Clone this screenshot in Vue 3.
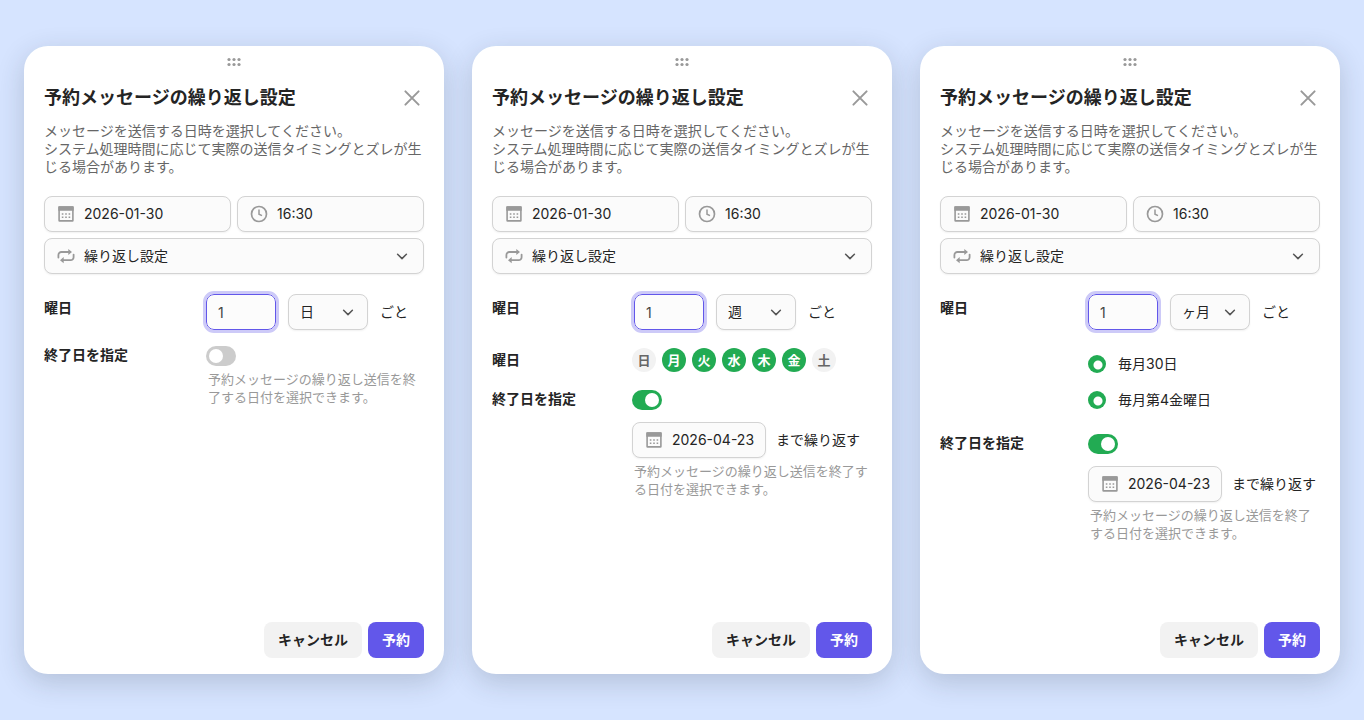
<script setup>
import { reactive } from 'vue'

const week = ['日', '月', '火', '水', '木', '金', '土']
const units = ['日', '週', 'ヶ月']

const panels = reactive([
  { id: 'daily', unit: '日', count: '1', date: '2026-01-30', time: '16:30', ends: false, until: '' },
  {
    id: 'weekly', unit: '週', count: '1', date: '2026-01-30', time: '16:30', ends: true, until: '2026-04-23',
    days: ['月', '火', '水', '木', '金'],
  },
  {
    id: 'monthly', unit: 'ヶ月', count: '1', date: '2026-01-30', time: '16:30', ends: true, until: '2026-04-23',
    choices: ['毎月30日', '毎月第4金曜日'],
  },
])

function toggleDay(panel, day) {
  const at = panel.days.indexOf(day)
  if (at < 0) panel.days.push(day)
  else panel.days.splice(at, 1)
}
</script>

<template>
  <svg class="sprite" aria-hidden="true">
    <symbol id="calendar" viewBox="0 0 18 18">
      <rect x="2.1" y="2.1" width="13.8" height="13.8" rx="0.4" fill="none" stroke="currentColor" stroke-width="1.6" />
      <path d="M1.8 1.3h14.4q.5 0 .5.5v4H1.3v-4q0-.5.5-.5z" fill="currentColor" />
      <path d="M4.8 8.2h1.6v1.6H4.8zM8.2 8.2h1.6v1.6H8.2zM11.6 8.2h1.6v1.6h-1.6zM4.8 11.4h1.6v1.6H4.8zM8.2 11.4h1.6v1.6H8.2zM11.6 11.4h1.6v1.6h-1.6z" fill="currentColor" />
    </symbol>
    <symbol id="clock" viewBox="0 0 18 18">
      <circle cx="9" cy="9" r="7.5" fill="none" stroke="currentColor" stroke-width="1.7" />
      <path d="M9 4.4v4.8l3 1.5" fill="none" stroke="currentColor" stroke-width="1.5" />
    </symbol>
    <symbol id="repeat" viewBox="0 0 18 18">
      <path d="M1.4 10.6V8a3 3 0 0 1 3-3H12M16.6 7.6v2.6a3 3 0 0 1-3 3H6" fill="none" stroke="currentColor" stroke-width="1.8" stroke-linecap="round" />
      <path d="M11.3 1.9l3.7 3.1-3.7 3.1zM6.7 10.1L3 13.2l3.7 3.1z" fill="currentColor" />
    </symbol>
    <symbol id="chevron" viewBox="0 0 12 12">
      <path d="M1.6 4.2L6 8.6l4.4-4.4" fill="none" stroke="currentColor" stroke-width="1.5" stroke-linecap="round" stroke-linejoin="round" />
    </symbol>
  </svg>

  <main class="page">
    <form v-for="p in panels" :key="p.id" class="card" :class="p.id" @submit.prevent>
      <svg class="grip" viewBox="0 0 14 12" aria-hidden="true">
        <g fill="currentColor">
          <circle cx="2" cy="3.5" r="1.6" /><circle cx="7" cy="3.5" r="1.6" /><circle cx="12" cy="3.5" r="1.6" />
          <circle cx="2" cy="8.5" r="1.6" /><circle cx="7" cy="8.5" r="1.6" /><circle cx="12" cy="8.5" r="1.6" />
        </g>
      </svg>

      <header class="head">
        <h2>予約メッセージの繰り返し設定</h2>
        <button type="button" class="close" aria-label="閉じる">
          <svg viewBox="0 0 24 24"><path d="M5.4 5.4l13.2 13.2M18.6 5.4L5.4 18.6" fill="none" stroke="currentColor" stroke-width="2" stroke-linecap="round" /></svg>
        </button>
      </header>
      <p class="lead">メッセージを送信する日時を選択してください。<br>システム処理時間に応じて実際の送信タイミングとズレが生じる場合があります。</p>

      <div class="when">
        <label class="field">
          <svg class="icon"><use href="#calendar" /></svg>
          <input v-model="p.date" type="text" aria-label="日付">
        </label>
        <label class="field">
          <svg class="icon"><use href="#clock" /></svg>
          <input v-model="p.time" type="text" aria-label="時刻">
        </label>
        <label class="field wide">
          <svg class="icon"><use href="#repeat" /></svg>
          <select aria-label="繰り返し"><option>繰り返し設定</option></select>
          <svg class="chevron"><use href="#chevron" /></svg>
        </label>
      </div>

      <div class="rules">
        <label class="name first" :for="p.id + '-count'">曜日</label>
        <div class="line every">
          <input :id="p.id + '-count'" v-model="p.count" class="count" type="text" inputmode="numeric">
          <div class="field unit">
            <select v-model="p.unit" aria-label="単位">
              <option v-for="u in units" :key="u">{{ u }}</option>
            </select>
            <svg class="chevron"><use href="#chevron" /></svg>
          </div>
          <span>ごと</span>
        </div>

        <template v-if="p.days">
          <span :id="p.id + '-days'" class="name tall">曜日</span>
          <div class="weekdays" role="group" :aria-labelledby="p.id + '-days'">
            <button
              v-for="d in week" :key="d" type="button" class="weekday"
              :class="{ on: p.days.includes(d) }" :aria-pressed="p.days.includes(d)"
              @click="toggleDay(p, d)"
            >{{ d }}</button>
          </div>
        </template>

        <div v-if="p.choices" class="choices">
          <label v-for="m in p.choices" :key="m" class="choice">
            <input type="radio" :name="m" checked>{{ m }}
          </label>
        </div>

        <label class="name" :for="p.id + '-ends'">終了日を指定</label>
        <div class="end">
          <input :id="p.id + '-ends'" v-model="p.ends" class="switch" type="checkbox" role="switch">
          <div v-if="p.ends" class="line until">
            <label class="field">
              <svg class="icon"><use href="#calendar" /></svg>
              <input v-model="p.until" type="text" aria-label="終了日">
            </label>
            <span>まで繰り返す</span>
          </div>
          <p class="note">予約メッセージの繰り返し送信を終了する日付を選択できます。</p>
        </div>
      </div>

      <footer class="actions">
        <button type="button" class="btn">キャンセル</button>
        <button type="submit" class="btn primary">予約</button>
      </footer>
    </form>
  </main>
</template>

<style>
body { background: #d6e4ff; }
</style>

<style scoped>
.sprite { position: absolute; width: 0; height: 0; }
.page, .page button, .page input, .page select {
  font-family: Inter, "Noto Sans CJK JP", sans-serif;
  font-size: 14px;
  line-height: 18px;
  color: #242424;
}
.page {
  display: grid;
  grid-template-columns: repeat(3, minmax(0, 1fr));
  gap: 28px;
  box-sizing: border-box;
  min-height: 100vh;
  padding: 46px 24px;
}
.card {
  display: flex;
  flex-direction: column;
  padding: 10px 20px 16px;
  border-radius: 24px;
  background: #fff;
  box-shadow: 0 8px 28px rgba(40, 50, 60, 0.2);
}
.grip { width: 14px; height: 12px; align-self: center; color: #999; }
.head {
  display: flex;
  align-items: center;
  justify-content: space-between;
  margin-top: 16px;
}
h2 { margin: 0; font-size: 18px; line-height: 28px; font-weight: 700; }
.close { width: 24px; height: 24px; padding: 0; border: 0; background: none; }
.close svg { display: block; color: #999; }
.lead { margin: 10px 0 20px; color: #666; }
.when { display: grid; grid-template-columns: 1fr 1fr; gap: 6px; }
.wide { grid-column: span 2; }
.field {
  display: flex;
  align-items: center;
  gap: 9px;
  box-sizing: border-box;
  height: 36px;
  padding: 0 15px 0 12px;
  border: 1px solid #d3d3d3;
  border-radius: 8px;
  background: #fbfbfb;
  box-shadow: 0 1px 2px rgba(0, 0, 0, 0.06);
}
.field input, .field select {
  flex: 1;
  min-width: 0;
  width: 0;
  height: 18px;
  padding: 0;
  border: 0;
  outline: 0;
  appearance: none;
  background: none;
}
.icon { flex: none; width: 18px; height: 18px; color: #999; }
.chevron { flex: none; width: 12px; height: 12px; color: #555; pointer-events: none; }

.rules {
  --label: 162px;
  display: grid;
  grid-template-columns: var(--label) minmax(0, 1fr);
  gap: 16px 0;
  margin-top: 20px;
}
.weekly .rules { --label: 140px; }
.monthly .rules { --label: 148px; }
.name { font-weight: 700; }
.first { padding-top: 5px; }
.tall { line-height: 28px; }
.line { display: flex; align-items: center; white-space: nowrap; }
.every { gap: 12px; }
.weekly .every { padding-left: 2px; }
.page .count {
  box-sizing: border-box;
  width: 70px;
  height: 36px;
  padding: 0 11px;
  border: 1px solid #6257ea;
  border-radius: 8px;
  outline: 3px solid #cdcaf8;
  background: #fcfcfc;
  color: #444;
}
.unit { width: 80px; padding: 0 13px 0 11px; gap: 0; }
.weekdays { display: flex; gap: 6px; padding: 2px 0; }
.page .weekday {
  width: 24px;
  height: 24px;
  padding: 0;
  border: 0;
  border-radius: 50%;
  background: #f2f2f2;
  color: #666;
  font-size: 13px;
  font-weight: 700;
}
.page .weekday.on { background: #22ab53; color: #fff; }
.choices { grid-column: 2; }
.choice { display: flex; align-items: center; gap: 12px; height: 36px; }
.choice input {
  width: 18px;
  height: 18px;
  margin: 0;
  border-radius: 50%;
  appearance: none;
  background: radial-gradient(circle at 10px 10px, #fff 4px, #22ab53 5px);
}
.switch {
  display: flex;
  box-sizing: border-box;
  width: 30px;
  height: 20px;
  margin: 0;
  padding: 3px;
  border-radius: 10px;
  appearance: none;
  background: #ccc;
}
.switch::before { content: ""; width: 14px; height: 14px; border-radius: 50%; background: #fff; }
.switch:checked { justify-content: flex-end; background: #22ab53; }
.until { gap: 10px; margin-top: 12px; }
.until .field { width: 134px; padding-right: 10px; }
.note { margin: 4px 0 0; padding-left: 2px; color: #999; font-size: 13px; }

.actions { display: flex; justify-content: flex-end; gap: 6px; margin-top: auto; }
.page .btn {
  height: 36px;
  padding: 0 14px;
  border: 0;
  border-radius: 8px;
  background: #f2f2f2;
  font-weight: 700;
}
.page .primary { background: #6257ea; color: #fff; }
</style>
